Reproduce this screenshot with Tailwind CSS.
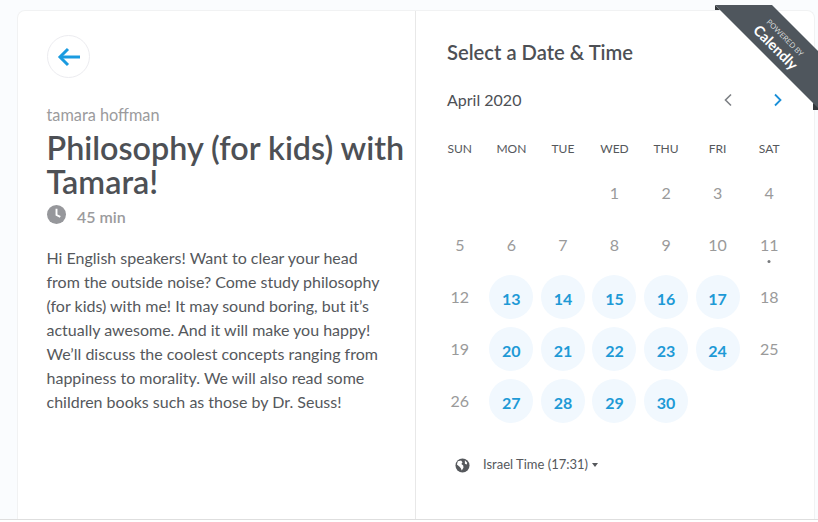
<!DOCTYPE html>
<html lang="en">
<head>
    <meta charset="UTF-8">
    <title>Select a Date &amp; Time</title>
    <script src="https://cdn.jsdelivr.net/npm/@tailwindcss/browser@4"></script>
</head>
<body class="bg-white font-['Lato','Open_Sans',sans-serif] overflow-hidden">
    <div class="relative h-[520px] w-[818px] overflow-hidden border-b border-[#dedede] bg-[#fafcfe] pl-[17px] pt-[10px]">
        <!-- Card -->
        <div class="flex h-[509px] w-[798px] rounded-t-lg border-x border-t border-[#f1f2f3] bg-white">
            <!-- Event details -->
            <div class="w-[398px] shrink-0 border-r border-[#e8e8e8] pl-[29px] pt-[24px]">
                <button class="flex h-[43px] w-[43px] items-center justify-center rounded-full border border-[#ececf0] text-[#1a9be0]">
                    <svg width="24" height="20" viewBox="0 0 24 20" fill="none" stroke="currentColor" stroke-width="3"><path d="M23 10H3"/><path d="M11 2L3 10l8 8"/></svg>
                </button>
                <p class="mt-[27px] -ml-[0.5px] text-[16.3px] leading-[20px] text-[#9b9b9d]">tamara hoffman</p>
                <h1 class="mt-[6px] -ml-[0.5px] text-[32.3px] font-semibold leading-[34px] text-[#4d5055]">Philosophy (for kids) with<br>Tamara!</h1>
                <div class="mt-[6px] flex h-[20px] items-center gap-[11px] text-[16px] font-semibold text-[#9b9b9d]">
                    <svg class="-mt-[1px]" width="19" height="19" viewBox="0 0 20 20"><circle cx="10" cy="10" r="10" fill="#96979b"/><path d="M10 4v6.5l4 2" fill="none" stroke="#fff" stroke-width="2"/></svg>
                    <span class="mt-[4px]">45 min</span>
                </div>
                <p class="mt-[21px] -ml-[0.5px] text-[16px] leading-[24px] text-[#55585c]">Hi English speakers! Want to clear your head<br>from the outside noise? Come study philosophy<br>(for kids) with me! It may sound boring, but it’s<br>actually awesome. And it will make you happy!<br>We’ll discuss the coolest concepts ranging from<br>happiness to morality. We will also read some<br>children books such as those by Dr. Seuss!</p>
            </div>
            <!-- Calendar -->
            <div class="flex-1 pl-[18px] pt-[29px]">
                <h2 class="pl-[13px] text-[20.2px] font-semibold leading-[24px] text-[#4d5055]">Select a Date &amp; Time</h2>
                <div class="mt-[24px] flex h-[24px] w-[361.5px] items-center justify-between pl-[13px] pr-[13px]">
                    <span class="text-[16px] text-[#4d5055]">April 2020</span>
                    <div class="flex items-center gap-[40px]">
                        <svg width="10" height="14" viewBox="0 0 10 14" fill="none" stroke="#7d8085" stroke-width="1.6"><path d="M8 1.5L2.5 7 8 12.5"/></svg>
                        <svg width="10" height="14" viewBox="0 0 10 14" fill="none" stroke="#1a8fd8" stroke-width="1.8"><path d="M2 1.5L7.5 7 2 12.5"/></svg>
                    </div>
                </div>
                <div class="mt-[29px] grid w-[361px] grid-cols-7 text-center text-[12px] leading-[16px] text-[#55585c]">
                    <span>SUN</span><span>MON</span><span>TUE</span><span>WED</span><span>THU</span><span>FRI</span><span>SAT</span>
                </div>
                <div class="mt-[10px] grid w-[361px] grid-cols-7 auto-rows-[52px] place-items-center text-[16px] text-[#9a9a9a]">
                    <span></span><span></span><span></span>
                    <span>1</span><span>2</span><span>3</span><span>4</span>
                    <span>5</span><span>6</span><span>7</span><span>8</span><span>9</span><span>10</span>
                    <span class="relative">11<i class="absolute left-1/2 top-[27px] h-[3px] w-[3px] -translate-x-1/2 rounded-full bg-[#77797c]"></i></span>
                    <span>12</span>
                    <span class="flex h-[44px] w-[44px] items-center justify-center rounded-full bg-[#f1f8fe] pt-[4px] font-bold text-[#1e9ad6]">13</span>
                    <span class="flex h-[44px] w-[44px] items-center justify-center rounded-full bg-[#f1f8fe] pt-[4px] font-bold text-[#1e9ad6]">14</span>
                    <span class="flex h-[44px] w-[44px] items-center justify-center rounded-full bg-[#f1f8fe] pt-[4px] font-bold text-[#1e9ad6]">15</span>
                    <span class="flex h-[44px] w-[44px] items-center justify-center rounded-full bg-[#f1f8fe] pt-[4px] font-bold text-[#1e9ad6]">16</span>
                    <span class="flex h-[44px] w-[44px] items-center justify-center rounded-full bg-[#f1f8fe] pt-[4px] font-bold text-[#1e9ad6]">17</span>
                    <span>18</span>
                    <span>19</span>
                    <span class="flex h-[44px] w-[44px] items-center justify-center rounded-full bg-[#f1f8fe] pt-[4px] font-bold text-[#1e9ad6]">20</span>
                    <span class="flex h-[44px] w-[44px] items-center justify-center rounded-full bg-[#f1f8fe] pt-[4px] font-bold text-[#1e9ad6]">21</span>
                    <span class="flex h-[44px] w-[44px] items-center justify-center rounded-full bg-[#f1f8fe] pt-[4px] font-bold text-[#1e9ad6]">22</span>
                    <span class="flex h-[44px] w-[44px] items-center justify-center rounded-full bg-[#f1f8fe] pt-[4px] font-bold text-[#1e9ad6]">23</span>
                    <span class="flex h-[44px] w-[44px] items-center justify-center rounded-full bg-[#f1f8fe] pt-[4px] font-bold text-[#1e9ad6]">24</span>
                    <span>25</span>
                    <span>26</span>
                    <span class="flex h-[44px] w-[44px] items-center justify-center rounded-full bg-[#f1f8fe] pt-[4px] font-bold text-[#1e9ad6]">27</span>
                    <span class="flex h-[44px] w-[44px] items-center justify-center rounded-full bg-[#f1f8fe] pt-[4px] font-bold text-[#1e9ad6]">28</span>
                    <span class="flex h-[44px] w-[44px] items-center justify-center rounded-full bg-[#f1f8fe] pt-[4px] font-bold text-[#1e9ad6]">29</span>
                    <span class="flex h-[44px] w-[44px] items-center justify-center rounded-full bg-[#f1f8fe] pt-[4px] font-bold text-[#1e9ad6]">30</span>
                </div>
                <div class="mt-[28px] flex h-[20px] items-center pl-[21px] text-[13px] text-[#55585c]">
                    <svg width="15" height="15" viewBox="0 0 16 16"><circle cx="8" cy="8" r="7.5" fill="#55585c"/><path d="M3 3.5l3.5-.8 1.5 1.8-1.2 2 2 1.5.2 2.5-1.8 2.8-1-2.5-1.3-1.5L2 7z" fill="#fff"/><path d="M10.5 2.5l2.5 2.5-.5 2-2-1z" fill="#fff"/></svg>
                    <span class="ml-[13px]">Israel Time (17:31)</span>
                    <i class="ml-[4px] h-0 w-0 border-x-[3.5px] border-t-[4px] border-x-transparent border-t-[#55585c]"></i>
                </div>
            </div>
        </div>
        <!-- Badge -->
        <div class="absolute right-0 top-[5px] h-[105px] w-[103px]">
            <svg class="absolute inset-0" width="103" height="105" viewBox="0 0 103 105"><path d="M0 0v5h5z M98 98v7h5v-5z" fill="#33373b"/><path d="M0 0H57L103 46V103z" fill="#4f565d"/></svg>
            <div class="absolute left-[24px] top-[26px] w-[80px] rotate-45 text-center text-white">
                <div class="text-[7.5px] leading-[10px] text-[#d5d8da]">POWERED BY</div>
                <div class="text-[14.5px] font-bold leading-[16px]">Calendly</div>
            </div>
        </div>
    </div>
</body>
</html>
